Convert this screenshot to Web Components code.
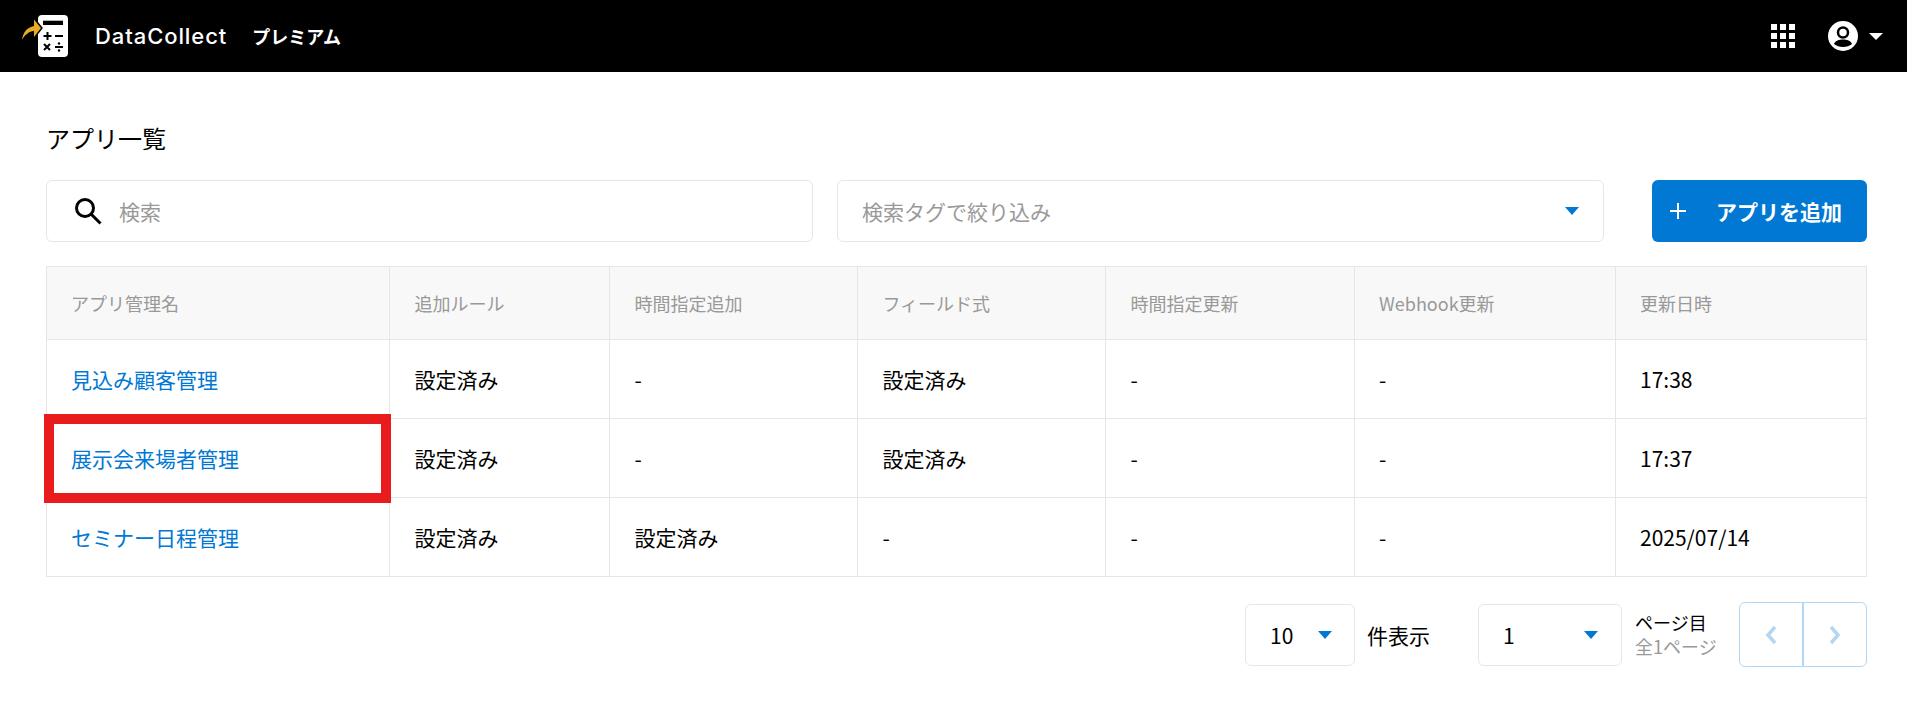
<!DOCTYPE html>
<html lang="ja">
<head>
<meta charset="utf-8">
<title>DataCollect</title>
<style>
    html, body { margin: 0; padding: 0; background: #fff; }
    body { font-family: "Noto Sans CJK JP", "Noto Sans", sans-serif; color: #000; overflow: hidden; }
</style>
</head>
<body>
<app-header></app-header>
<app-page></app-page>
<script>
class AppHeader extends HTMLElement {
    constructor() {
        super();
        this.attachShadow({ mode: 'open' });
    }

    connectedCallback() {
        this.shadowRoot.innerHTML = `
            <style>
                :host { display: flex; align-items: center; height: 72px; background: #000; color: #fff; padding: 0 24px 0 22px; }
                .logo { width: 46px; height: 44px; display: block; }
                .name { font: 500 22px Inter, "Noto Sans", sans-serif; margin-left: 27px; letter-spacing: 0.92px; }
                .plan { font-size: 18px; font-weight: 700; margin-left: 25px; line-height: 1; }
                .right { margin-left: auto; display: flex; align-items: center; }
                .apps { width: 24px; height: 24px; display: grid; grid-template-columns: repeat(3, 6px); grid-auto-rows: 6px; gap: 3px; margin-right: 33px; }
                .apps i { background: #fff; display: block; }
                .user { width: 30px; height: 30px; display: block; }
                .caret { width: 0; height: 0; border: 7px solid transparent; border-top: 7px solid #fff; border-bottom: 0; margin-left: 11px; }
            </style>
            <svg class="logo" viewBox="0 0 46 44">
                <rect x="16" y="1" width="30" height="42" rx="4" fill="#fff"/>
                <rect x="21" y="6.700" width="20" height="4.300" fill="#000"/>
                <path d="M25.500 18v8M21.500 22h8M33 22h8" stroke="#000" stroke-width="2" fill="none"/>
                <path d="M22 30l6 6M28 30l-6 6M33 33h8" stroke="#000" stroke-width="2" fill="none"/>
                <circle cx="37" cy="29.500" r="1.200" fill="#000"/><circle cx="37" cy="36.500" r="1.200" fill="#000"/>
                <path d="M0 26C1 18 5 13.500 12 12V5.500l7 8.500-7 9v-6C7 17.500 3 20.500 0 26z" fill="#e8ab22" stroke="#000" stroke-width="3" paint-order="stroke"/>
            </svg>
            <span class="name">DataCollect</span>
            <span class="plan">プレミアム</span>
            <div class="right">
                <div class="apps">${'<i></i>'.repeat(9)}</div>
                <svg class="user" viewBox="0 0 30 30">
                    <circle cx="15" cy="15" r="15" fill="#fff"/>
                    <circle cx="15" cy="11.500" r="5" fill="none" stroke="#000" stroke-width="2.500"/>
                    <path d="M6 23c1.500-3.500 5-4.500 9-4.500s7.500 1 9 4.500c-2.500 2-5.500 3-9 3s-6.500-1-9-3z" fill="#000"/>
                </svg>
                <span class="caret"></span>
            </div>
        `;
    }
}

class SelectBox extends HTMLElement {
    constructor() {
        super();
        this.attachShadow({ mode: 'open' });
    }

    connectedCallback() {
        this.shadowRoot.innerHTML = `
            <style>
                :host { display: flex; align-items: center; box-sizing: border-box; height: 62px; border: 1px solid #e6e6e6; border-radius: 6px; background: #fff; padding: 0 24px 0 24px; font-size: 21px; }
                .text { flex: 1; white-space: nowrap; }
                :host([placeholder]) .text { color: #999; }
                .caret { width: 0; height: 0; border: 7.500px solid transparent; border-top: 8px solid #0078d4; border-bottom: 0; flex: none; }
            </style>
            <span class="text"><slot></slot></span>
            <span class="caret"></span>
        `;
    }
}

class SearchBox extends HTMLElement {
    constructor() {
        super();
        this.attachShadow({ mode: 'open' });
    }

    connectedCallback() {
        this.shadowRoot.innerHTML = `
            <style>
                :host { display: flex; align-items: center; box-sizing: border-box; height: 62px; border: 1px solid #e6e6e6; border-radius: 6px; background: #fff; padding: 0 0 0 27px; font-size: 21px; color: #999; }
                svg { width: 28px; height: 28px; margin-right: 17px; flex: none; }
            </style>
            <svg viewBox="0 0 28 28" fill="none" stroke="#000">
                <circle cx="11" cy="11" r="8.500" stroke-width="3"/>
                <path d="M17 17l9.500 9.500" stroke-width="3"/>
            </svg>
            <span>検索</span>
        `;
    }
}

class AddButton extends HTMLElement {
    constructor() {
        super();
        this.attachShadow({ mode: 'open' });
    }

    connectedCallback() {
        this.shadowRoot.innerHTML = `
            <style>
                :host { display: flex; align-items: center; box-sizing: border-box; height: 62px; border-radius: 6px; background: #0078d4; color: #fff; padding-left: 18px; font-size: 21px; font-weight: 700; white-space: nowrap; }
                svg { width: 16px; height: 16px; margin-right: 30px; flex: none; }
            </style>
            <svg viewBox="0 0 16 16"><path d="M8 0v16M0 8h16" stroke="#fff" stroke-width="2"/></svg>
            <slot></slot>
        `;
    }
}

class AppTable extends HTMLElement {
    constructor() {
        super();
        this.attachShadow({ mode: 'open' });
    }

    connectedCallback() {
        const columns = ['アプリ管理名', '追加ルール', '時間指定追加', 'フィールド式', '時間指定更新', 'Webhook更新', '更新日時'];
        const rows = [
            ['見込み顧客管理', '設定済み', '-', '設定済み', '-', '-', '17:38'],
            ['展示会来場者管理', '設定済み', '-', '設定済み', '-', '-', '17:37'],
            ['セミナー日程管理', '設定済み', '設定済み', '-', '-', '-', '2025/07/14'],
        ];
        const head = columns.map(c => `<div class="th">${c}</div>`).join('');
        const body = rows.map(r => r.map((c, i) => `<div class="td${i === 0 ? ' link' : ''}">${c}</div>`).join('')).join('');
        this.shadowRoot.innerHTML = `
            <style>
                :host { display: grid; grid-template-columns: 343.400px 220px 248px 248px 248.600px 261px 251px; box-sizing: border-box; border-top: 1px solid #e6e6e6; border-right: 1px solid #e6e6e6; }
                .th, .td { display: flex; align-items: center; box-sizing: border-box; padding: 0 24px; border-left: 1px solid #e6e6e6; border-bottom: 1px solid #e6e6e6; white-space: nowrap; }
                .th { height: 73px; background: #f8f8f8; color: #999; font-size: 18px; }
                .td { height: 79px; font-size: 21px; }
                .link { color: #0078d4; }
            </style>
            ${head}${body}
        `;
    }
}

class AppPager extends HTMLElement {
    constructor() {
        super();
        this.attachShadow({ mode: 'open' });
    }

    connectedCallback() {
        this.shadowRoot.innerHTML = `
            <style>
                :host { display: flex; align-items: center; justify-content: flex-end; margin-top: 25px; }
                .per { width: 110px; padding-right: 22px; }
                .page { width: 144px; margin-left: 48px; padding-right: 23px; }
                .unit { font-size: 21px; margin-left: 12px; }
                .info { width: 81px; margin-left: 13px; margin-right: 23px; padding-bottom: 2px; font-size: 18px; line-height: 24px; white-space: nowrap; }
                .info div + div { color: #999; }
                .nav { display: flex; box-sizing: border-box; width: 128px; height: 65px; border: 1px solid #b3d7f2; border-radius: 6px; }
                .nav span { flex: 1; display: flex; align-items: center; justify-content: center; }
                .nav span + span { border-left: 2px solid #b3d7f2; }
                svg { width: 12px; height: 20px; }
            </style>
            <select-box class="per">10</select-box>
            <span class="unit">件表示</span>
            <select-box class="page">1</select-box>
            <div class="info"><div>ページ目</div><div>全1ページ</div></div>
            <div class="nav">
                <span><svg viewBox="0 0 12 20" fill="none" stroke="#b3d7f2" stroke-width="3.500"><path d="M10 2L3 10l7 8"/></svg></span>
                <span><svg viewBox="0 0 12 20" fill="none" stroke="#b3d7f2" stroke-width="3.500"><path d="M2 2l7 8-7 8"/></svg></span>
            </div>
        `;
    }
}

class AppPage extends HTMLElement {
    constructor() {
        super();
        this.attachShadow({ mode: 'open' });
    }

    connectedCallback() {
        this.shadowRoot.innerHTML = `
            <style>
                :host { display: block; position: relative; padding: 46px 40px 0 46px; }
                h1 { margin: 0; font-size: 24px; font-weight: 400; line-height: 40px; }
                .tools { display: grid; grid-template-columns: 767px 767px 239px; column-gap: 24px; margin: 22px 0 24px; }
                add-button { margin-left: 24px; }
                .mark { position: absolute; left: 44px; top: 342px; width: 347px; height: 89px; box-sizing: border-box; border: 10px solid #e81c1c; }
            </style>
            <h1>アプリ一覧</h1>
            <div class="tools">
                <search-box></search-box>
                <select-box placeholder>検索タグで絞り込み</select-box>
                <add-button>アプリを追加</add-button>
            </div>
            <app-table></app-table>
            <app-pager></app-pager>
            <div class="mark"></div>
        `;
    }
}

customElements.define('app-header', AppHeader);
customElements.define('select-box', SelectBox);
customElements.define('search-box', SearchBox);
customElements.define('add-button', AddButton);
customElements.define('app-table', AppTable);
customElements.define('app-pager', AppPager);
customElements.define('app-page', AppPage);
</script>
</body>
</html>
